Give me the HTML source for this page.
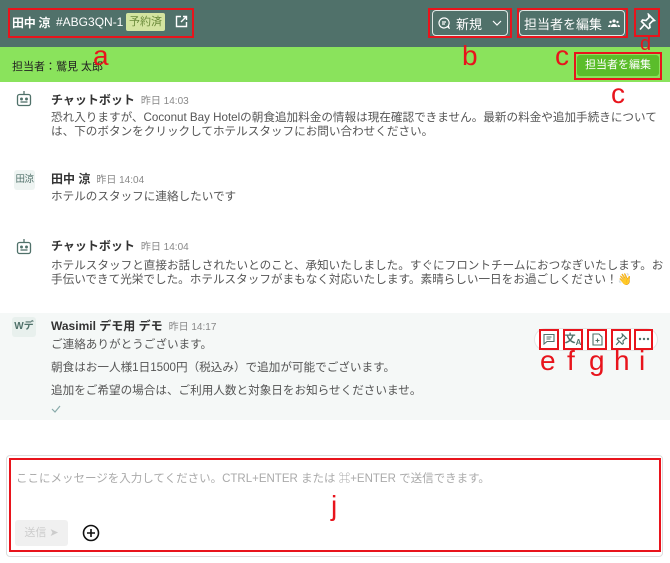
<!DOCTYPE html>
<html><head><meta charset="utf-8"><style>
*{margin:0;padding:0;box-sizing:border-box}
body{width:670px;height:563px;overflow:hidden;background:#fff;font-family:"Liberation Sans","Noto Sans CJK JP",sans-serif;position:relative;color:#333}
.a{position:absolute}
.rb{position:absolute;border:2px solid #e8141c}
.rl{position:absolute;color:#e8141c;font-size:28px;line-height:1;font-family:"Liberation Sans",sans-serif}
.hdr{left:0;top:0;width:670px;height:47px;background:#50716a}
.btn{position:absolute;border:1px solid #dfe7e4;border-radius:4px;color:#fff;font-size:13px;display:flex;align-items:center;justify-content:center;gap:6px}
.name{font-size:12px;font-weight:bold;color:#333;white-space:nowrap}
.time{font-size:10px;color:#888;font-weight:normal;margin-left:6px}
.txt{font-size:11.6px;color:#555;line-height:14px;white-space:nowrap}
.ic{position:absolute;width:20px;height:20px;display:flex;align-items:center;justify-content:center}
</style></head><body>
<div class="a hdr"></div>
<div class="a" style="left:12px;top:14px;color:#fff;font-size:12px;font-weight:bold;white-space:nowrap;letter-spacing:-.3px">田中 涼</div>
<div class="a" style="left:56px;top:15px;color:#fff;font-size:12px;white-space:nowrap">#ABG3QN-1</div>
<div class="a" style="left:126px;top:13px;width:39px;height:18px;background:#d4e4a0;border-radius:2px;color:#6a8a3a;font-size:11px;text-align:center;line-height:18px">予約済</div>
<svg class="a" style="left:175px;top:15px" width="13" height="13" viewBox="0 0 13 13" fill="none" stroke="#fff" stroke-width="1.4"><path d="M6 1.5H1.5v10h10V7"/><path d="M8 1.5h3.5V5M11.5 1.5 6 7"/></svg>
<div class="rb" style="left:8px;top:8px;width:186px;height:30px"></div>

<div class="btn" style="left:432px;top:10px;width:76px;height:26px"><svg width="12" height="12" viewBox="0 0 12 12" fill="none" stroke="#fff" stroke-width="1.2"><path d="M6 1a5 5 0 1 0 3.5 8.6L11 11 10.4 8.6A5 5 0 0 0 6 1z"/><path d="M4 5h4M4 7h3"/></svg>新規<svg width="10" height="6" viewBox="0 0 10 6" fill="none" stroke="#fff" stroke-width="1.2" style="margin-left:4px"><path d="M1 1l4 4 4-4"/></svg></div>
<div class="rb" style="left:428px;top:8px;width:84px;height:30px"></div>
<div class="btn" style="left:519px;top:10px;width:106px;height:26px">担当者を編集<svg width="12" height="8" viewBox="0 0 12 8" fill="#fff"><circle cx="6" cy="2" r="1.6"/><circle cx="2.5" cy="3" r="1.2"/><circle cx="9.5" cy="3" r="1.2"/><path d="M3 8c0-2 1.3-3 3-3s3 1 3 3zM0 8c0-1.5.8-2.3 2.3-2.3L2.5 8zM12 8c0-1.5-.8-2.3-2.3-2.3L9.5 8z"/></svg></div>
<div class="rb" style="left:517px;top:8px;width:111px;height:30px"></div>
<svg class="a" style="left:639px;top:13px" width="17" height="18" viewBox="0 0 17 18" fill="none" stroke="#fff" stroke-width="1.6"><path d="M9.5 1.5l6 6-2 .5-3 3 .5 3.5-1.5 1-7-7 1-1.5 3.5.5 3-3z"/><path d="M5.5 11.5 1 16.5"/></svg>
<div class="rb" style="left:634px;top:8px;width:26px;height:29px"></div>

<div class="a" style="left:0;top:47px;width:670px;height:35px;background:#8ae35c"></div>
<div class="a" style="left:12px;top:58px;font-size:11px;color:#222">担当者：鷲見 太郎</div>
<div class="rl" style="left:93px;top:42px">a</div>
<div class="rl" style="left:462px;top:42px">b</div>
<div class="rl" style="left:555px;top:42px">c</div>
<div class="rl" style="left:640px;top:34px;font-size:20px">d</div>
<div class="a" style="left:577px;top:55px;width:82px;height:21px;background:#5bbd2b;border-radius:3px;color:#fff;font-size:11px;text-align:center;line-height:21px">担当者を編集</div>
<div class="rb" style="left:574px;top:52px;width:88px;height:28px"></div>
<div class="rl" style="left:611px;top:80px">c</div>

<svg class="a" style="left:16px;top:90px" width="16" height="18" viewBox="0 0 16 18" fill="none" stroke="#50716a" stroke-width="1.3"><path d="M8 1v3"/><rect x="1.5" y="4.5" width="13" height="11" rx="2"/><circle cx="5.5" cy="9" r=".8" fill="#50716a"/><circle cx="10.5" cy="9" r=".8" fill="#50716a"/><path d="M4.5 12h7"/></svg>
<div class="a name" style="left:51px;top:91px">チャットボット<span class="time">昨日 14:03</span></div>
<div class="a txt" style="left:51px;top:111px">恐れ入りますが、Coconut Bay Hotelの朝食追加料金の情報は現在確認できません。最新の料金や追加手続きについて<br>は、下のボタンをクリックしてホテルスタッフにお問い合わせください。</div>

<div class="a" style="left:14px;top:170px;width:21px;height:20px;background:#eef4f2;border-radius:3px;color:#50716a;font-size:9.5px;line-height:20px;text-align:center;white-space:nowrap;letter-spacing:-.5px">田涼</div>
<div class="a name" style="left:51px;top:170px">田中 涼<span class="time">昨日 14:04</span></div>
<div class="a txt" style="left:51px;top:190px">ホテルのスタッフに連絡したいです</div>

<svg class="a" style="left:16px;top:238px" width="16" height="18" viewBox="0 0 16 18" fill="none" stroke="#50716a" stroke-width="1.3"><path d="M8 1v3"/><rect x="1.5" y="4.5" width="13" height="11" rx="2"/><circle cx="5.5" cy="9" r=".8" fill="#50716a"/><circle cx="10.5" cy="9" r=".8" fill="#50716a"/><path d="M4.5 12h7"/></svg>
<div class="a name" style="left:51px;top:237px">チャットボット<span class="time">昨日 14:04</span></div>
<div class="a txt" style="left:51px;top:259px">ホテルスタッフと直接お話しされたいとのこと、承知いたしました。すぐにフロントチームにおつなぎいたします。お<br>手伝いできて光栄でした。ホテルスタッフがまもなく対応いたします。素晴らしい一日をお過ごしください！👋</div>

<div class="a" style="left:0;top:313px;width:670px;height:107px;background:#f5f8f7"></div>
<div class="a" style="left:12px;top:317px;width:24px;height:20px;background:#e8f0ed;border-radius:3px;color:#50716a;font-size:10px;font-weight:bold;line-height:20px;text-align:center;white-space:nowrap">Wデ</div>
<div class="a name" style="left:51px;top:317px">Wasimil デモ用 デモ<span class="time">昨日 14:17</span></div>
<div class="a txt" style="left:51px;top:338px">ご連絡ありがとうございます。</div>
<div class="a txt" style="left:51px;top:361px">朝食はお一人様1日1500円（税込み）で追加が可能でございます。</div>
<div class="a txt" style="left:51px;top:384px">追加をご希望の場合は、ご利用人数と対象日をお知らせくださいませ。</div>
<svg class="a" style="left:51px;top:405px" width="10" height="8" viewBox="0 0 10 8" fill="none" stroke="#8aa" stroke-width="1.2"><path d="M1 4l3 3 5-6"/></svg>

<div class="a" style="left:534px;top:328px;width:124px;height:23px;background:#fff;border:1px solid #e5e5e5;border-radius:12px"></div>
<div class="ic" style="left:539px;top:329px"><svg width="12" height="12" viewBox="0 0 12 12" fill="none" stroke="#50716a" stroke-width="1.1"><path d="M1 1.5h10v7H4L1 11z"/><path d="M3.5 4h5M3.5 6h4"/></svg></div>
<div class="ic" style="left:563px;top:329px"><span style="font-size:11px;color:#50716a;font-weight:bold">文<sub style="font-size:8px">A</sub></span></div>
<div class="ic" style="left:587px;top:329px"><svg width="11" height="13" viewBox="0 0 11 13" fill="none" stroke="#50716a" stroke-width="1.1"><path d="M1 1h6l3 3v8H1z"/><path d="M5.5 5.5v4M3.5 7.5h4"/></svg></div>
<div class="ic" style="left:611px;top:329px"><svg width="13" height="13" viewBox="0 0 17 18" fill="none" stroke="#50716a" stroke-width="1.6"><path d="M9.5 1.5l6 6-2 .5-3 3 .5 3.5-1.5 1-7-7 1-1.5 3.5.5 3-3z"/><path d="M5.5 11.5 1 16.5"/></svg></div>
<div class="ic" style="left:634px;top:329px"><svg width="12" height="4" viewBox="0 0 12 4" fill="#50716a"><circle cx="2" cy="2" r="1.2"/><circle cx="6" cy="2" r="1.2"/><circle cx="10" cy="2" r="1.2"/></svg></div>
<div class="rb" style="left:539px;top:329px;width:20px;height:21px"></div>
<div class="rb" style="left:563px;top:329px;width:20px;height:21px"></div>
<div class="rb" style="left:587px;top:329px;width:20px;height:21px"></div>
<div class="rb" style="left:611px;top:329px;width:20px;height:21px"></div>
<div class="rb" style="left:634px;top:329px;width:19px;height:21px"></div>
<div class="rl" style="left:540px;top:347px">e</div>
<div class="rl" style="left:567px;top:347px">f</div>
<div class="rl" style="left:589px;top:347px">g</div>
<div class="rl" style="left:614px;top:347px">h</div>
<div class="rl" style="left:639px;top:347px">i</div>

<div class="a" style="left:6px;top:455px;width:657px;height:102px;border:1px solid #ddd;border-radius:4px"></div>
<div class="rb" style="left:9px;top:458px;width:652px;height:94px"></div>
<div class="a" style="left:16px;top:470px;font-size:11.5px;color:#aaa;white-space:nowrap">ここにメッセージを入力してください。CTRL+ENTER または ⌘+ENTER で送信できます。</div>
<div class="rl" style="left:331px;top:492px">j</div>
<div class="a" style="left:15px;top:520px;width:53px;height:26px;background:#f0f0f0;border-radius:3px;color:#ccc;font-size:11px;line-height:26px;text-align:center">送信 ➤</div>
<svg class="a" style="left:82px;top:524px" width="18" height="18" viewBox="0 0 18 18" fill="none" stroke="#111" stroke-width="1.6"><circle cx="9" cy="9" r="7.5"/><path d="M9 5v8M5 9h8"/></svg>
</body></html>
